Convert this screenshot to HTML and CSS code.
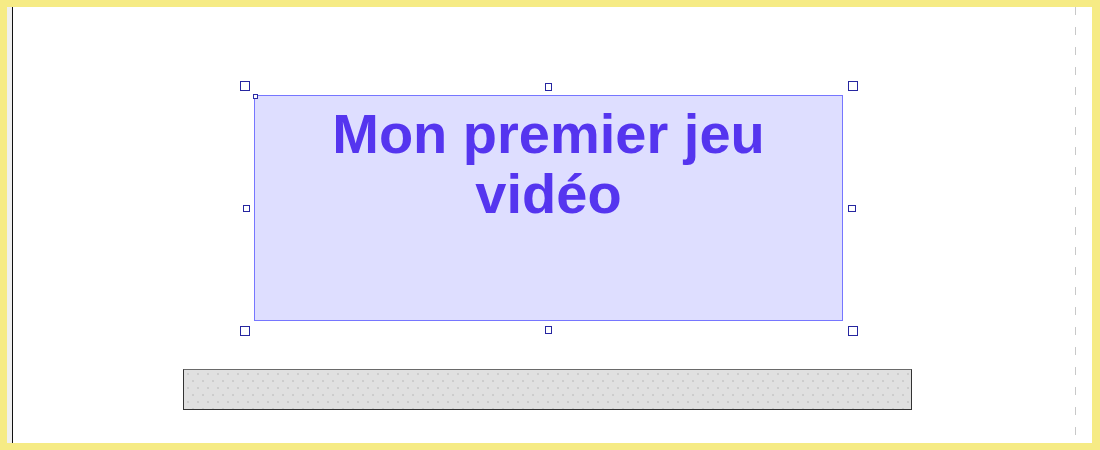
FILE: index.html
```html
<!DOCTYPE html>
<html lang="fr">
<head>
<meta charset="utf-8">
<title>Éditeur</title>
<link rel="stylesheet" href="styles.css">
</head>
<body>
<div class="frame">
  <div class="stage">
    <div class="gutter"></div>
    <div class="canvas">
      <div class="guide"></div>
      <div class="title-box">
        <h1 class="title">Mon premier jeu vidéo</h1>
      </div>
      <span class="grip grip-anchor"></span>
      <span class="handle handle-tl"></span>
      <span class="handle handle-tr"></span>
      <span class="handle handle-bl"></span>
      <span class="handle handle-br"></span>
      <span class="handle handle-t"></span>
      <span class="handle handle-b"></span>
      <span class="handle handle-l"></span>
      <span class="handle handle-r"></span>
      <div class="bar"></div>
    </div>
  </div>
</div>
</body>
</html>
```

FILE: styles.css
```css
html, body {
  margin: 0;
  padding: 0;
}
body {
  width: 1100px;
  height: 450px;
  overflow: hidden;
  font-family: "Liberation Sans", Arial, sans-serif;
}
.frame {
  box-sizing: border-box;
  width: 1100px;
  height: 450px;
  padding: 7px 8px 7px 7px;
  background: #f6eb85;
}
.stage {
  display: flex;
  height: 100%;
  background: #ffffff;
}
.gutter {
  width: 5px;
  background: #efefef;
  border-right: 1px solid #111111;
  flex: none;
}
.canvas {
  position: relative;
  flex: 1;
  background: #ffffff;
}
.guide {
  position: absolute;
  left: 1062px;
  top: 0;
  bottom: 0;
  width: 1px;
  background: repeating-linear-gradient(to bottom, #c8c8c8 0, #c8c8c8 8px, transparent 8px, transparent 20px);
}
.title-box {
  position: absolute;
  left: 241px;
  top: 88px;
  width: 589px;
  height: 226px;
  box-sizing: border-box;
  border: 1px solid #7676ff;
  background: #dedeff;
  padding-top: 8px;
}
.title {
  margin: 0 auto;
  width: 480px;
  text-align: center;
  font-size: 56px;
  line-height: 60px;
  font-weight: bold;
  color: #5535ef;
}
.grip-anchor {
  position: absolute;
  left: 240px;
  top: 87px;
  width: 5px;
  height: 5px;
  box-sizing: border-box;
  border: 1px solid #2b2ba6;
  background: #ffffff;
}
.handle {
  position: absolute;
  box-sizing: border-box;
  border: 1px solid #2626a0;
  background: #ffffff;
  width: 10px;
  height: 10px;
}
.handle-tl { left: 227px; top: 74px; }
.handle-tr { left: 835px; top: 74px; }
.handle-bl { left: 227px; top: 319px; }
.handle-br { left: 835px; top: 319px; }
.handle-t { left: 532px; top: 76px; width: 7px; height: 8px; }
.handle-b { left: 532px; top: 319px; width: 7px; height: 8px; }
.handle-l { left: 230px; top: 198px; width: 7px; height: 7px; }
.handle-r { left: 835px; top: 198px; width: 8px; height: 7px; }
.bar {
  position: absolute;
  left: 170px;
  top: 362px;
  width: 729px;
  height: 41px;
  box-sizing: border-box;
  border: 1px solid #333333;
  border-top-color: #6a6a6a;
  background-color: #e0e0e0;
  background-image:
    radial-gradient(circle at 1px 1px, #c2c2c2 0.6px, transparent 0.9px),
    radial-gradient(circle at 6px 8px, #c2c2c2 0.6px, transparent 0.9px);
  background-size: 10px 14px, 10px 14px;
  background-position: 3px 3px, 3px 3px;
}
```
